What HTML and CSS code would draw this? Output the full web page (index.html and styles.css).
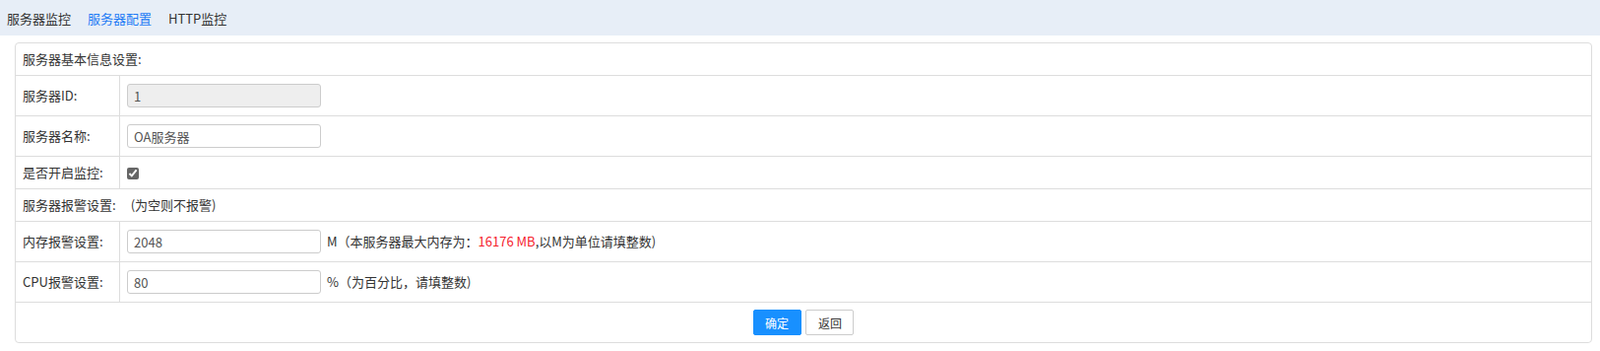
FILE: index.html
```html
<!DOCTYPE html>
<html lang="zh-CN">
<head>
  <meta charset="UTF-8">
  <title>服务器配置</title>
  <link rel="stylesheet" href="styles.css">
</head>
<body>
  <div class="topnav">
    <a href="#">服务器监控</a>
    <a href="#" class="active">服务器配置</a>
    <a href="#">HTTP监控</a>
  </div>

  <div class="card">
    <table class="form-table">
      <tr>
        <td colspan="2">服务器基本信息设置:</td>
      </tr>
      <tr>
        <td class="label">服务器ID:</td>
        <td><input type="text" value="1" class="field" disabled></td>
      </tr>
      <tr>
        <td class="label">服务器名称:</td>
        <td><input type="text" value="OA服务器" class="field"></td>
      </tr>
      <tr>
        <td class="label">是否开启监控:</td>
        <td><input type="checkbox" class="check" checked></td>
      </tr>
      <tr>
        <td colspan="2">服务器报警设置:<span class="note">(为空则不报警)</span></td>
      </tr>
      <tr>
        <td class="label">内存报警设置:</td>
        <td><input type="text" value="2048" class="field"><span class="hint">M（本服务器最大内存为：<span class="red">16176 MB</span>,以M为单位请填整数)</span></td>
      </tr>
      <tr>
        <td class="label">CPU报警设置:</td>
        <td><input type="text" value="80" class="field"><span class="hint">%（为百分比，请填整数)</span></td>
      </tr>
      <tr>
        <td colspan="2" class="actions">
          <button class="btn btn-primary">确定</button>
          <button class="btn">返回</button>
        </td>
      </tr>
    </table>
  </div>
</body>
</html>
```

FILE: styles.css
```css
body {
  margin: 0;
  font-family: "Noto Sans CJK SC", "Noto Sans", sans-serif;
  font-size: 13px;
  color: #333;
  background: #fff;
}

.topnav {
  height: 36px;
  background: #e7eef7;
  display: flex;
  align-items: center;
  padding-left: 7px;
  gap: 17px;
}

.topnav a {
  color: #333;
  text-decoration: none;
  font-size: 13px;
}

.topnav a.active {
  color: #1e7bf5;
}

.card {
  margin: 7px 8px 0 15px;
  border: 1px solid #ddd;
  border-radius: 4px;
}

.form-table {
  width: 100%;
  border-collapse: collapse;
}

.form-table td {
  border-top: 1px solid #ddd;
  padding: 8px 7px;
  line-height: 16px;
  vertical-align: middle;
}

.form-table tr:first-child td {
  border-top: none;
}

.form-table td.label {
  width: 91px;
  border-right: 1px solid #ddd;
}

.field {
  box-sizing: border-box;
  width: 197px;
  height: 24px;
  padding: 0 6px;
  border: 1px solid #ccc;
  border-radius: 3px;
  font-family: inherit;
  font-size: 13px;
  color: #555;
  vertical-align: middle;
}

.field:disabled {
  background: #eee;
}

.check {
  margin: 0;
  width: 12px;
  height: 12px;
  vertical-align: middle;
  accent-color: #666;
}

.note {
  margin-left: 15px;
}

.hint {
  margin-left: 6px;
  vertical-align: middle;
}

.red {
  color: #f5222d;
}

.actions {
  text-align: center;
  padding: 7px 7px !important;
}

.btn {
  height: 26px;
  width: 49px;
  border: 1px solid #ccc;
  border-radius: 2px;
  background: #fff;
  color: #333;
  font-family: inherit;
  font-size: 12px;
  cursor: pointer;
  padding: 0;
  margin: 0 1px;
}

.btn-primary {
  background: #1890ff;
  border-color: #1890ff;
  color: #fff;
}
```
